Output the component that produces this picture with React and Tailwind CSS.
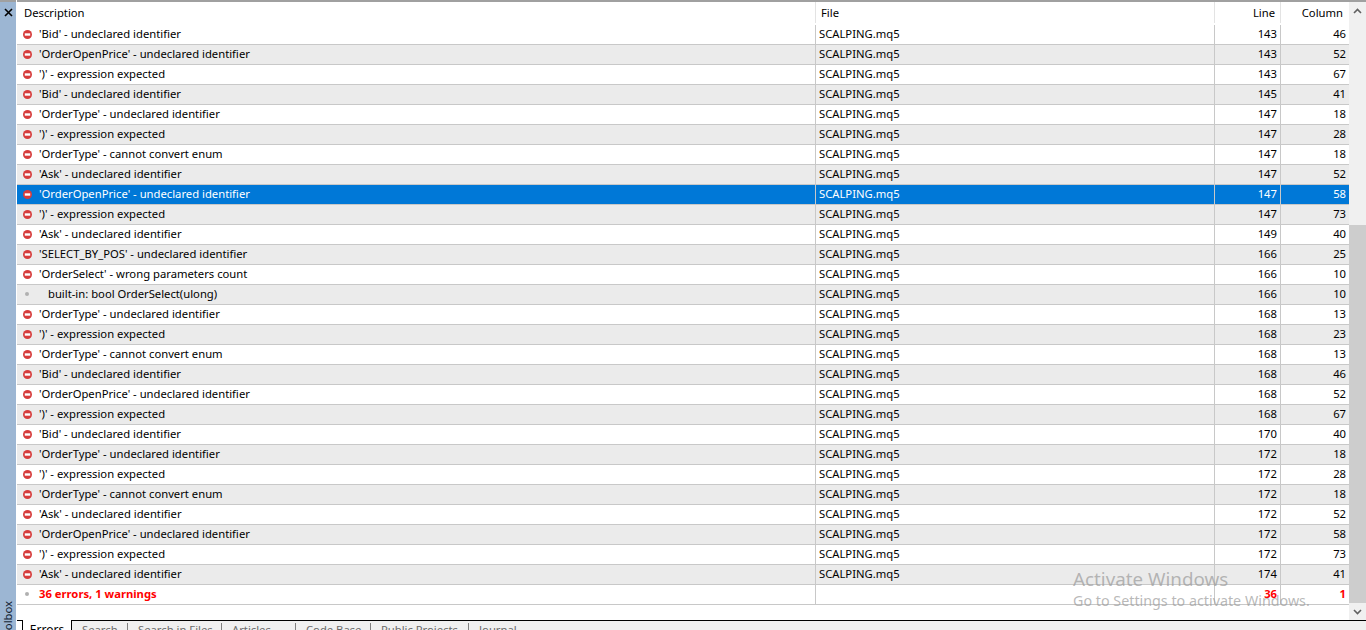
import React from 'react';

const rows = [
  ["'Bid' - undeclared identifier", 143, 46],
  ["'OrderOpenPrice' - undeclared identifier", 143, 52],
  ["')' - expression expected", 143, 67],
  ["'Bid' - undeclared identifier", 145, 41],
  ["'OrderType' - undeclared identifier", 147, 18],
  ["')' - expression expected", 147, 28],
  ["'OrderType' - cannot convert enum", 147, 18],
  ["'Ask' - undeclared identifier", 147, 52],
  ["'OrderOpenPrice' - undeclared identifier", 147, 58, 'selected'],
  ["')' - expression expected", 147, 73],
  ["'Ask' - undeclared identifier", 149, 40],
  ["'SELECT_BY_POS' - undeclared identifier", 166, 25],
  ["'OrderSelect' - wrong parameters count", 166, 10],
  ["built-in: bool OrderSelect(ulong)", 166, 10, 'info'],
  ["'OrderType' - undeclared identifier", 168, 13],
  ["')' - expression expected", 168, 23],
  ["'OrderType' - cannot convert enum", 168, 13],
  ["'Bid' - undeclared identifier", 168, 46],
  ["'OrderOpenPrice' - undeclared identifier", 168, 52],
  ["')' - expression expected", 168, 67],
  ["'Bid' - undeclared identifier", 170, 40],
  ["'OrderType' - undeclared identifier", 172, 18],
  ["')' - expression expected", 172, 28],
  ["'OrderType' - cannot convert enum", 172, 18],
  ["'Ask' - undeclared identifier", 172, 52],
  ["'OrderOpenPrice' - undeclared identifier", 172, 58],
  ["')' - expression expected", 172, 73],
  ["'Ask' - undeclared identifier", 174, 41],
];

const tabs = [
  { name: 'Search', width: 'w-[56px]' },
  { name: 'Search in Files', width: 'w-[94px]' },
  { name: 'Articles', width: 'w-[74px]' },
  { name: 'Code Base', width: 'w-[75px]' },
  { name: 'Public Projects', width: 'w-[98px]' },
  { name: 'Journal', width: 'w-[60px]' },
];

const ErrorIcon = () => (
  <svg width="9" height="9" viewBox="0 0 10 10" className="mt-px shrink-0">
    <circle cx="5" cy="5" r="5" fill="#d63c3c" />
    <rect x="2" y="3.7" width="6" height="2.6" fill="#fff" />
  </svg>
);

const Row = ({ text, line, col, kind, odd }) => {
  const selected = kind === 'selected';
  const bg = selected ? 'bg-[#0078d7] text-white' : odd ? 'bg-[#ebebeb] text-black' : 'bg-white text-black';
  return (
    <div className={`flex h-5 border-b border-[#c8c8c8] ${bg}`}>
      <div className="flex w-[799px] items-center border-r border-[#c8c8c8] pb-px pl-[6px]">
        {kind === 'info' ? <span className="ml-[2px] mr-[18px] size-1 rounded-full bg-[#b0b0b0]" /> : <ErrorIcon />}
        <span className={kind === 'info' ? 'ml-[1px]' : 'ml-[7px]'}>{text}</span>
      </div>
      <div className="flex w-[399px] items-center border-r border-[#c8c8c8] pb-px pl-[3px]">SCALPING.mq5</div>
      <div className="flex w-[66px] items-center justify-end border-r border-[#c8c8c8] pb-px pr-[3px]">{line}</div>
      <div className="flex flex-1 items-center justify-end pb-px pr-[3px]">{col}</div>
    </div>
  );
};

export default function App() {
  return (
    <div className="relative flex h-[630px] w-[1366px] overflow-hidden bg-white font-['Noto_Sans',sans-serif] text-[11.25px] leading-none text-black">
      {/* Toolbox side strip */}
      <div className="flex w-4 shrink-0 flex-col items-center justify-between border-t-2 border-[#a0a0a0] bg-[#9cb6d3]">
        <svg width="9" height="9" viewBox="0 0 9 9" className="mt-[6px]">
          <path d="M1 1l7 7M8 1l-7 7" stroke="#000" strokeWidth="1.6" />
        </svg>
        <span className="mb-[-12px] text-[#10202e] [writing-mode:vertical-rl] rotate-180">Toolbox</span>
      </div>

      <div className="flex min-w-0 flex-1 flex-col pl-px">
        <div className="flex h-[620px] border-t-2 border-[#a0a0a0]">
          {/* Error list */}
          <div className="w-[1332px]">
            <div className="flex h-[23px] items-center pb-[2px]">
              <div className="flex h-full w-[799px] items-center border-r border-[#e3e3e3] pl-[7px]">Description</div>
              <div className="flex h-full w-[399px] items-center border-r border-[#e3e3e3] pl-[5px]">File</div>
              <div className="flex h-full w-[66px] items-center justify-end border-r border-[#e3e3e3] pr-[5px]">Line</div>
              <div className="flex h-full flex-1 items-center justify-end pr-[6px]">Column</div>
            </div>
            {rows.map((r, i) => (
              <Row key={i} text={r[0]} line={r[1]} col={r[2]} kind={r[3]} odd={i % 2 === 1} />
            ))}
            <div className="flex h-5 border-b border-[#c8c8c8] font-bold text-[#ff0000]">
              <div className="flex w-[799px] items-center border-r border-[#c8c8c8] pb-px pl-[8px]">
                <span className="mr-[10px] size-1 rounded-full bg-[#b0b0b0]" />
                36 errors, 1 warnings
              </div>
              <div className="w-[399px] border-r border-[#c8c8c8]" />
              <div className="flex w-[66px] items-center justify-end border-r border-[#c8c8c8] pb-px pr-[3px]">36</div>
              <div className="flex flex-1 items-center justify-end pb-px pr-[3px]">1</div>
            </div>
          </div>

          {/* Scrollbar */}
          <div className="flex w-[17px] flex-col bg-[#f0f0f0]">
            <div className="flex h-[17px] items-center justify-center">
              <svg width="9" height="6" viewBox="0 0 9 6"><path d="M1 5l3.5-3.5L8 5" fill="none" stroke="#606060" strokeWidth="1.6" /></svg>
            </div>
            <div className="mt-[206px] h-[378px] bg-[#cdcdcd]" />
            <div className="flex h-[17px] items-center justify-center">
              <svg width="9" height="6" viewBox="0 0 9 6"><path d="M1 1l3.5 3.5L8 1" fill="none" stroke="#606060" strokeWidth="1.6" /></svg>
            </div>
          </div>
        </div>

        {/* Bottom tabs */}
        <div className="flex flex-1 bg-[#f0f0f0]">
          <div className="h-full w-[6px] border-t border-r border-black bg-white" />
          <div className="flex w-[49px] justify-center border-r border-black bg-white pt-[4px] text-[12px]">Errors</div>
          <div className="flex min-w-0 flex-1 border-t border-black pt-[2px]">
            {tabs.map(t => (
              <div key={t.name} className={`flex h-[12px] items-start border-r border-[#808080] pl-[10px] pt-px text-[#6a6a6a] last:border-r-0 ${t.width}`}>{t.name}</div>
            ))}
          </div>
        </div>
      </div>

      {/* Windows watermark */}
      <div className="pointer-events-none absolute left-[1073px] top-[567px] text-[#9a9a9a]/70">
        <div className="text-[18.8px] leading-6">Activate Windows</div>
        <div className="mt-[2px] text-[14.3px] leading-4">Go to Settings to activate Windows.</div>
      </div>
    </div>
  );
}
